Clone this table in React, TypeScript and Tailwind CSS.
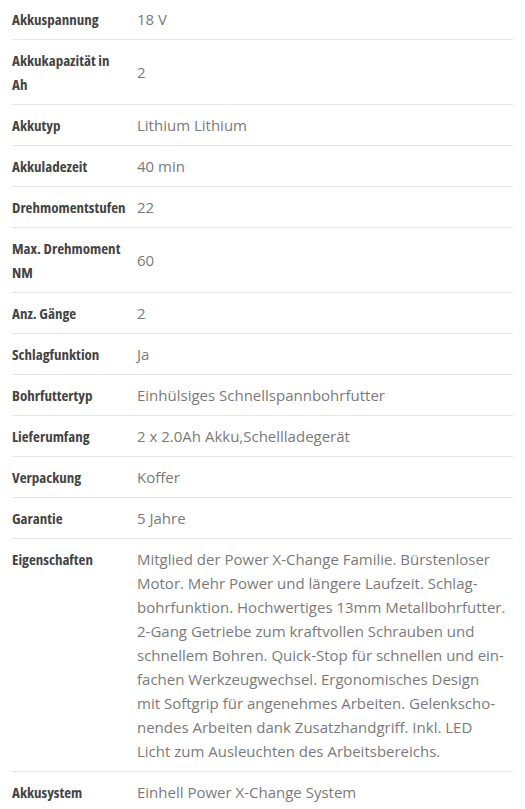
import React from 'react';

const rows: { label: string; value: string | string[] }[] = [
  { label: 'Akkuspannung', value: '18 V' },
  { label: 'Akkukapazität in Ah', value: '2' },
  { label: 'Akkutyp', value: 'Lithium Lithium' },
  { label: 'Akkuladezeit', value: '40 min' },
  { label: 'Drehmomentstufen', value: '22' },
  { label: 'Max. Drehmoment NM', value: '60' },
  { label: 'Anz. Gänge', value: '2' },
  { label: 'Schlagfunktion', value: 'Ja' },
  { label: 'Bohrfuttertyp', value: 'Einhülsiges Schnellspannbohrfutter' },
  { label: 'Lieferumfang', value: '2 x 2.0Ah Akku,Schellladegerät' },
  { label: 'Verpackung', value: 'Koffer' },
  { label: 'Garantie', value: '5 Jahre' },
  {
    label: 'Eigenschaften',
    // hyphenated the way the shop renders it
    value: [
      'Mitglied der Power X-Change Familie. Bürstenloser',
      'Motor. Mehr Power und längere Laufzeit. Schlag-',
      'bohrfunktion. Hochwertiges 13mm Metallbohrfutter.',
      '2-Gang Getriebe zum kraftvollen Schrauben und',
      'schnellem Bohren. Quick-Stop für schnellen und ein-',
      'fachen Werkzeugwechsel. Ergonomisches Design',
      'mit Softgrip für angenehmes Arbeiten. Gelenkscho-',
      'nendes Arbeiten dank Zusatzhandgriff. Inkl. LED',
      'Licht zum Ausleuchten des Arbeitsbereichs.',
    ],
  },
  { label: 'Akkusystem', value: 'Einhell Power X-Change System' },
];

export default function App() {
  return (
    <div className="min-h-screen bg-white px-3 font-['Open_Sans',sans-serif]">
      {/* Spec table */}
      <div className="-mt-px">
        {rows.map((row) => (
          <div
            key={row.label}
            className="grid grid-cols-[125px_1fr] border-b border-[#e6e6e6] py-2"
          >
            <div className="self-start pr-[10px] text-[15px] font-bold leading-6 text-[#444] font-stretch-condensed">
              {row.label}
            </div>
            <div className="self-center text-[15px] leading-6 text-[#7a7a7a]">
              {Array.isArray(row.value)
                ? row.value.map((line) => (
                    <span key={line} className="block whitespace-nowrap">
                      {line}
                    </span>
                  ))
                : row.value}
            </div>
          </div>
        ))}
      </div>
    </div>
  );
}
